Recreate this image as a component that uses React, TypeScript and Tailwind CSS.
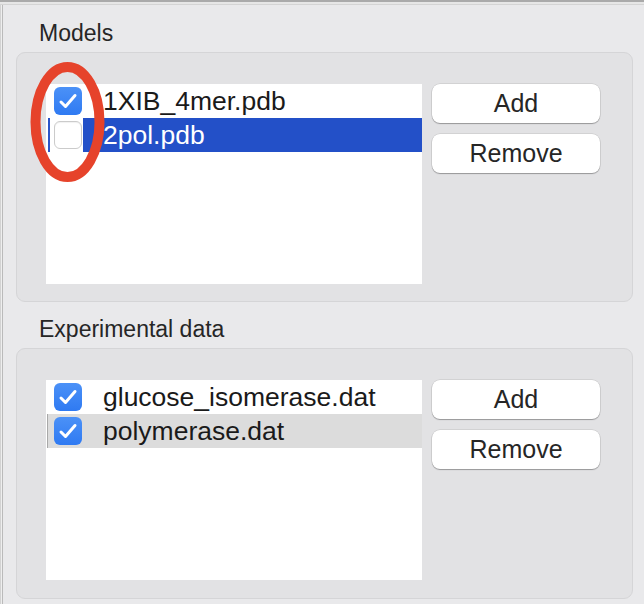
import React from 'react';

type Item = { name: string; checked: boolean; state?: 'selected' | 'focused' };

const models: Item[] = [
  { name: '1XIB_4mer.pdb', checked: true },
  { name: '2pol.pdb', checked: false, state: 'selected' },
];

const experimental: Item[] = [
  { name: 'glucose_isomerase.dat', checked: true },
  { name: 'polymerase.dat', checked: true, state: 'focused' },
];

function Checkbox({ checked }: { checked: boolean }) {
  if (!checked) {
    return (
      <div className="w-[28px] h-[28px] rounded-[6px] bg-white border border-[#cbcbcb] shadow-[inset_0_1px_1px_rgba(0,0,0,0.06)]" />
    );
  }
  return (
    <div className="w-[28px] h-[28px] rounded-[6px] bg-gradient-to-b from-[#4b91f7] to-[#2f7af2] flex items-center justify-center">
      <svg width="28" height="28" viewBox="0 0 28 28">
        <path d="M7 15 L11.5 19.5 L21 8.5" fill="none" stroke="white" strokeWidth="3" strokeLinecap="round" strokeLinejoin="round" />
      </svg>
    </div>
  );
}

function Row({ item }: { item: Item }) {
  if (item.state === 'selected') {
    return (
      <div className="flex h-[34px]">
        <div className="ml-[2px] w-[35px] border-l-2 border-[#2a55c9] bg-white flex items-center pl-[4px]">
          <Checkbox checked={item.checked} />
        </div>
        <div className="flex-1 bg-[#2350c8] text-white pl-[20px] leading-[34px]">{item.name}</div>
      </div>
    );
  }
  if (item.state === 'focused') {
    return (
      <div className="flex h-[34px] ml-px border-l border-[#a8a8a8] bg-[#dcdcdc]">
        <div className="w-[36px] flex items-center pl-[6px]">
          <Checkbox checked={item.checked} />
        </div>
        <div className="flex-1 text-[#1a1a1a] pl-[19px] leading-[34px]">{item.name}</div>
      </div>
    );
  }
  return (
    <div className="flex h-[34px]">
      <div className="w-[37px] flex items-center pl-[8px]">
        <Checkbox checked={item.checked} />
      </div>
      <div className="flex-1 text-[#1a1a1a] pl-[20px] leading-[34px]">{item.name}</div>
    </div>
  );
}

function Button({ label }: { label: string }) {
  return (
    <button className="w-[168px] h-[39px] rounded-[8px] bg-white text-[25px] text-[#262626] leading-none shadow-[0_1px_1px_rgba(0,0,0,0.28),0_0_0_0.5px_rgba(0,0,0,0.14)]">
      {label}
    </button>
  );
}

function Group({ title, items, tall }: { title: string; items: Item[]; tall?: boolean }) {
  return (
    <>
      <div className="pl-[36px] h-[28px] text-[23px] leading-[28px] text-[#262626]">{title}</div>
      <div
        className={`mt-[5px] ml-[13px] w-[617px] rounded-[9px] border border-[#d5d5d7] bg-[#e2e2e4] flex gap-[10px] pl-[29px] pt-[31px] ${
          tall ? 'h-[251px]' : 'h-[250px]'
        }`}
      >
        <div className="w-[376px] h-[200px] bg-white text-[26.5px]">
          {items.map((it) => (
            <Row key={it.name} item={it} />
          ))}
        </div>
        <div className="flex flex-col gap-[11px]">
          <Button label="Add" />
          <Button label="Remove" />
        </div>
      </div>
    </>
  );
}

export default function App() {
  return (
    <div
      className="relative w-[644px] h-[604px] overflow-hidden bg-[#e9e9eb] flex flex-col"
      style={{ fontFamily: '"Liberation Sans", Arial, sans-serif' }}
    >
      <div className="h-[2px] bg-[#aaaaaa]" />
      <div className="h-[2px] bg-[#e6e6e6]" />
      <div className="h-px bg-[#d4d4d4]" />
      <div className="flex flex-1">
        <div className="w-px bg-[#d2d2d2]" />
        <div className="w-px bg-[#eeeeee]" />
        <div className="w-px bg-[#bababa]" />
        <div className="flex-1 flex flex-col pt-[14px]">
          <Group title="Models" items={models} />
          <div className="h-[13px]" />
          <Group title="Experimental data" items={experimental} tall />
        </div>
      </div>

      {/* red annotation ring */}
      <svg className="absolute left-0 top-0 pointer-events-none" width="644" height="604">
        <ellipse cx="67.5" cy="122" rx="32" ry="55" fill="none" stroke="#e6432b" strokeWidth="10" />
      </svg>
    </div>
  );
}
